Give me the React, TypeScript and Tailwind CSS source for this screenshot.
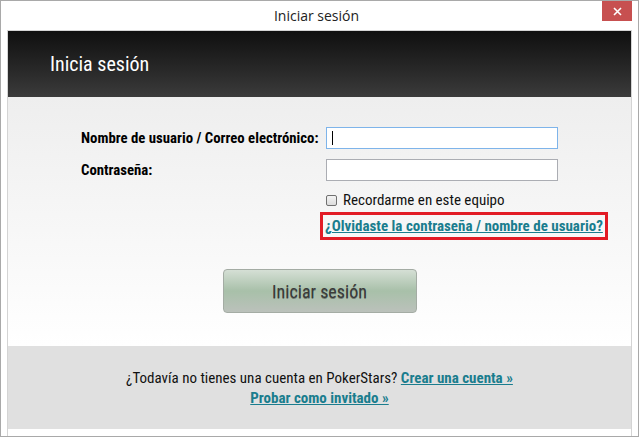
import React from 'react';

const cond = { fontFamily: "'Liberation Sans Narrow', 'Roboto Condensed', Roboto, sans-serif" } as React.CSSProperties;

const App: React.FC = () => {
    return (
        <div className="w-[639px] h-[437px] bg-white border border-[#a9a9a9] flex flex-col" style={{ fontFamily: "'Open Sans', 'Noto Sans', sans-serif" }}>
            {/* title bar */}
            <div className="h-[29px] grid grid-cols-[1fr_auto_1fr] items-start">
                <div />
                <div className="pt-[5px] text-[14px] leading-[20px] text-[#222] pr-[6px]">Iniciar sesión</div>
                <div className="flex justify-end pr-[6px]">
                    <button className="w-[30px] h-[20px] bg-[#c75050] flex items-center justify-center text-white">
                        <svg width="9" height="9" viewBox="0 0 9 9"><path d="M1 1 L8 8 M8 1 L1 8" stroke="white" strokeWidth="1.6" /></svg>
                    </button>
                </div>
            </div>

            <div className="mx-[6px] flex-1 flex flex-col border-x border-t border-[#d4d4d4]">
                {/* header */}
                <div className="h-[66px] bg-gradient-to-b from-[#101010] to-[#3b3b3b] flex items-center pl-[42px]">
                    <h1 className="text-white text-[20px] leading-none" style={cond}>Inicia sesión</h1>
                </div>

                {/* body */}
                <div className="h-[249px] bg-gradient-to-b from-[#eeeeee] to-[#ffffff] flex flex-col pt-[30px]" style={cond}>
                    <div className="pl-[73px] grid grid-cols-[245px_232px] gap-y-[10px] items-center">
                        <label className="text-[14.8px] leading-[18px] font-bold text-black whitespace-nowrap">Nombre de usuario / Correo electrónico:</label>
                        <div className="h-[22px] bg-white border border-[#7eb4ea] flex items-center pl-[5px]">
                            <span className="w-px h-[14px] bg-black" />
                        </div>
                        <label className="text-[14.8px] leading-[18px] font-bold text-black whitespace-nowrap">Contraseña:</label>
                        <div className="h-[22px] bg-white border border-[#abadb3]" />
                    </div>

                    <div className="pl-[318px] mt-[11px] flex items-center gap-[6px] h-[16px]">
                        <span className="w-[11px] h-[11px] rounded-[2px] border border-[#707070] bg-gradient-to-b from-[#f4f4f4] to-[#dcdcdc]" />
                        <span className="text-[15px] leading-[16px] text-[#111]">Recordarme en este equipo</span>
                    </div>

                    <div className="ml-[312px] mt-[4px] self-start h-[28px] border-[3px] border-[#e21b25] flex items-center px-[2px]">
                        <a className="text-[15px] leading-[18px] font-bold text-[#1a7d8e] underline whitespace-nowrap">¿Olvidaste la contraseña / nombre de usuario?</a>
                    </div>

                    <div className="flex justify-center mt-[29px]">
                        <button
                            className="w-[194px] h-[44px] rounded-[4px] border border-[#a4aca4] bg-gradient-to-b from-[#d5dfd5] via-[#a8c0a9] to-[#bbc1bb] text-[18px] text-[#3a3a3a]"
                            style={{ ...cond, textShadow: '0 1px 0 rgba(0,0,0,0.35)' }}
                        >
                            Iniciar sesión
                        </button>
                    </div>
                </div>

                {/* footer */}
                <div className="h-[83px] bg-[#e0e0e0] flex flex-col items-center justify-center gap-[2px] text-[15px] leading-[18px]" style={cond}>
                    <p className="text-[#111]">
                        ¿Todavía no tienes una cuenta en PokerStars?{' '}
                        <a className="font-bold text-[#1a7d8e] underline">Crear una cuenta »</a>
                    </p>
                    <a className="font-bold text-[#1a7d8e] underline">Probar como invitado »</a>
                </div>

                <div className="flex-1 bg-white" />
            </div>
        </div>
    );
};

export default App;
